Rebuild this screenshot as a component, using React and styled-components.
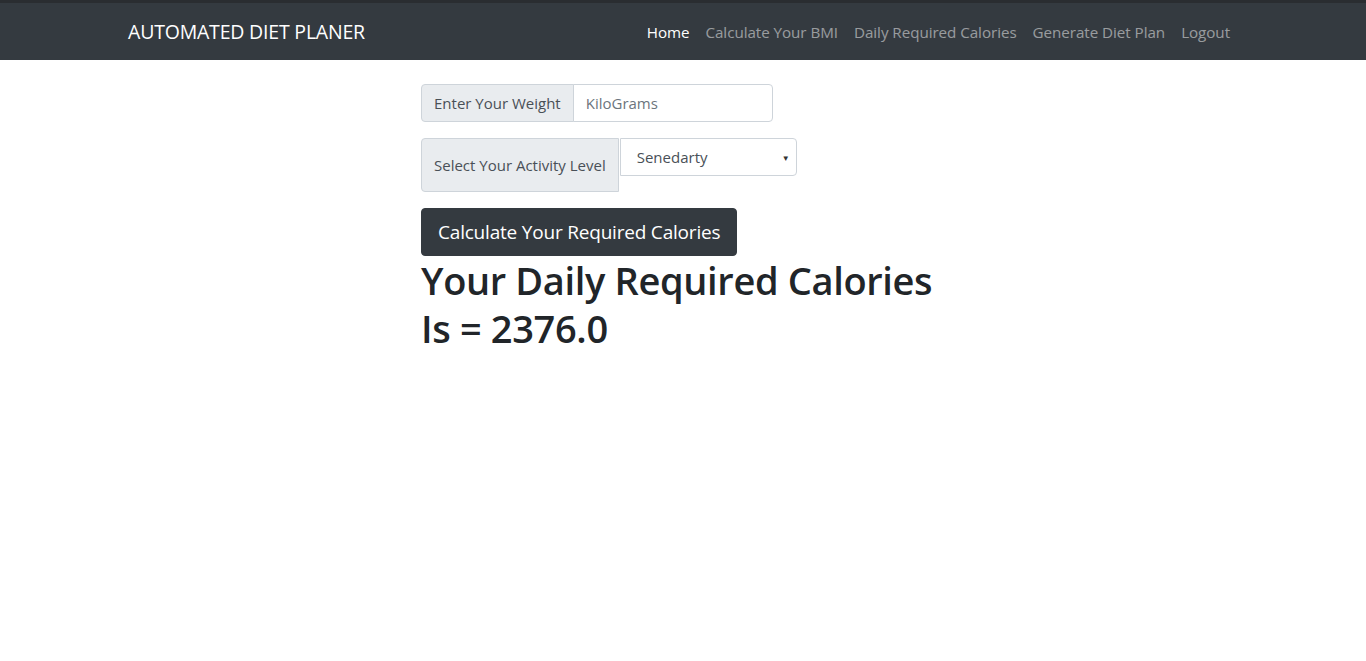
import React from 'react'
import styled, { createGlobalStyle } from 'styled-components'

const GlobalStyle = createGlobalStyle`
  body {
    margin: 0;
    font-family: "Open Sans", "Noto Sans", sans-serif;
    color: #212529;
    background: #fff;
  }
  * { box-sizing: border-box; }
`

function App() {
  const links = ['Home', 'Calculate Your BMI', 'Daily Required Calories', 'Generate Diet Plan', 'Logout']
  return (
    <>
      <GlobalStyle />
      <Navbar>
        <NavInner>
          <Brand>AUTOMATED DIET PLANER</Brand>
          <NavList>
            {links.map((l, i) => (
              <NavLink key={l} $active={i === 0}>{l}</NavLink>
            ))}
          </NavList>
        </NavInner>
      </Navbar>

      <Main>
        <InputGroup>
          <GroupLabel>Enter Your Weight</GroupLabel>
          <TextInput placeholder="KiloGrams" />
        </InputGroup>
        <InputGroup>
          <GroupLabel $tall>Select Your Activity Level</GroupLabel>
          <SelectBox>
            <span>Senedarty</span>
            <Caret>▼</Caret>
          </SelectBox>
        </InputGroup>
        <DarkButton>Calculate Your Required Calories</DarkButton>
        <Result>Your Daily Required Calories Is = 2376.0</Result>
      </Main>
    </>
  )
}

export default App

const Navbar = styled.nav`
  background: #343a40;
  border-top: 3px solid #2a2d31;
  height: 60px;
  display: flex;
  align-items: center;
`
const NavInner = styled.div`
  width: 1140px;
  margin: 0 auto;
  padding: 0 15px;
  display: flex;
  align-items: center;
  justify-content: space-between;
`
const Brand = styled.div`
  color: #fff;
  font-size: 19.5px;
  letter-spacing: -0.2px;
`
const NavList = styled.ul`
  list-style: none;
  margin: 0;
  padding: 0;
  display: flex;
`
const NavLink = styled.li`
  padding: 0 8px;
  font-size: 15.2px;
  letter-spacing: -0.05px;
  color: ${p => (p.$active ? '#fff' : 'rgba(255,255,255,0.5)')};
`
const Main = styled.div`
  width: 530px;
  margin-left: 421px;
  padding-top: 24px;
  display: flex;
  flex-direction: column;
  align-items: flex-start;
`
const InputGroup = styled.div`
  display: flex;
  align-items: flex-start;
  margin-bottom: 16px;
`
const GroupLabel = styled.div`
  height: ${p => (p.$tall ? '54px' : '38px')};
  display: flex;
  align-items: center;
  padding: 0 12px;
  background: #e9ecef;
  border: 1px solid #ced4da;
  border-radius: 4px 0 0 4px;
  font-size: 15px;
  letter-spacing: 0;
  color: #495057;
  white-space: nowrap;
`
const TextInput = styled.input`
  width: 200px;
  height: 38px;
  margin-left: -1px;
  padding: 0 12px;
  border: 1px solid #ced4da;
  border-radius: 0 4px 4px 0;
  font-family: inherit;
  font-size: 15px;
  letter-spacing: 0;
  color: #495057;
  outline: none;
  &::placeholder { color: #6c757d; }
`
const SelectBox = styled.div`
  width: 177px;
  height: 38px;
  margin-left: 1px;
  padding: 0 6px 0 16px;
  display: flex;
  align-items: center;
  justify-content: space-between;
  border: 1px solid #ced4da;
  border-radius: 0 4px 4px 0;
  font-size: 15px;
  letter-spacing: 0;
  color: #495057;
`
const Caret = styled.span`
  font-size: 8px;
  color: #333;
`
const DarkButton = styled.button`
  height: 48px;
  padding: 0 16px;
  background: #343a40;
  border: 1px solid #343a40;
  border-radius: 4px;
  color: #fff;
  font-family: inherit;
  font-size: 19px;
  letter-spacing: -0.2px;
`
const Result = styled.h1`
  margin: 0;
  font-size: 38px;
  font-weight: 600;
  line-height: 48px;
  letter-spacing: -0.35px;
  color: #212529;
`
